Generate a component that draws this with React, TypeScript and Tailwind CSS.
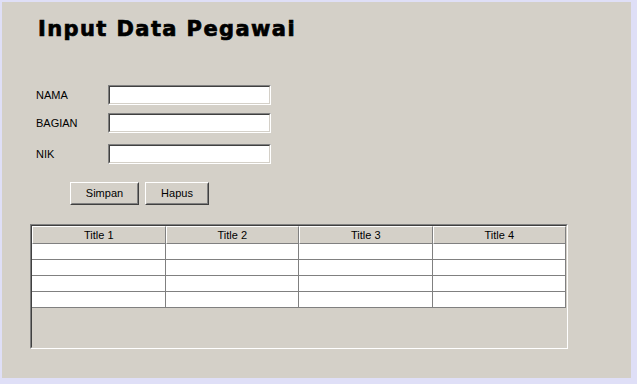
const sans = "font-['Liberation_Sans',Arial,sans-serif]";

const Field = ({ label, className }: { label: string; className?: string }) => (
  <div className={`flex items-center ${className ?? ""}`}>
    <span className="w-[72px] text-[11px] leading-none text-black">{label}</span>
    <div className="h-[20px] w-[163px] border border-t-[#808080] border-l-[#808080] border-r-white border-b-white">
      <div className="h-full w-full border border-t-[#404040] border-l-[#404040] border-r-[#d4d0c8] border-b-[#d4d0c8] bg-white" />
    </div>
  </div>
);

const Button = ({ label, width }: { label: string; width: string }) => (
  <button
    className={`h-[23px] ${width} border border-t-white border-l-white border-r-[#404040] border-b-[#404040] bg-[#d4d0c8] p-0`}
  >
    <div className="flex h-full w-full items-center justify-center border border-t-[#d4d0c8] border-l-[#d4d0c8] border-r-[#808080] border-b-[#808080] text-[11px] leading-none text-black">
      {label}
    </div>
  </button>
);

const titles = ["Title 1", "Title 2", "Title 3", "Title 4"];

export default function App() {
  return (
    <div className={`h-[384px] w-[637px] bg-[#dfdff7] pl-[2px] pt-[2px] ${sans}`}>
      <div className="h-[376px] w-[629px] bg-[#d4d0c8]">
        <h1 className="pl-[36px] pt-[17px] font-['DejaVu_Sans',sans-serif] text-[21px] font-bold leading-none tracking-[1.4px] text-black [-webkit-text-stroke:0.7px_black]">
          Input Data Pegawai
        </h1>

        {/* form */}
        <div className="pl-[34px] pt-[45px]">
          <Field label="NAMA" />
          <Field label="BAGIAN" className="mt-[8px]" />
          <Field label="NIK" className="mt-[11px]" />
        </div>

        <div className="mt-[18px] flex gap-[6px] pl-[68px]">
          <Button label="Simpan" width="w-[69px]" />
          <Button label="Hapus" width="w-[64px]" />
        </div>

        {/* table */}
        <div className="ml-[28px] mt-[19px] h-[125px] w-[538px] border border-t-[#808080] border-l-[#808080] border-r-white border-b-white">
          <div className="h-full w-full border border-t-[#404040] border-l-[#404040] border-r-[#d4d0c8] border-b-[#d4d0c8] bg-[#d4d0c8]">
            <div className="grid grid-cols-4">
              {titles.map((t) => (
                <div
                  key={t}
                  className="flex h-[18px] items-center justify-center border border-t-white border-l-white border-r-[#808080] border-b-[#808080] text-[11px] leading-none text-black"
                >
                  {t}
                </div>
              ))}
            </div>
            {Array.from({ length: 4 }).map((_, r) => (
              <div key={r} className="grid grid-cols-4">
                {titles.map((t) => (
                  <div key={t} className="h-[16px] border-b border-r border-[#808080] bg-white" />
                ))}
              </div>
            ))}
          </div>
        </div>
      </div>
    </div>
  );
}
